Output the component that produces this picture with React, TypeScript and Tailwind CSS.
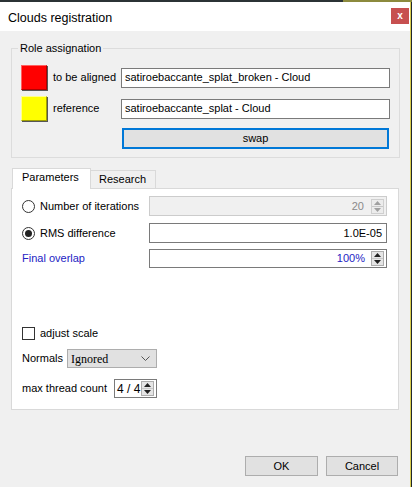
import React from 'react';

const font = "font-['Liberation_Sans',Arial,sans-serif]";

const SpinArrows: React.FC<{ disabled?: boolean; boxed?: boolean }> = ({ disabled, boxed }) => {
  const c = disabled ? '#a0a0a0' : '#202020';
  return (
    <div
      className={
        'flex flex-col w-[13px] h-[15px] mr-[2px] ' +
        (boxed ? 'border border-[#adadad] bg-[#e5e5e5]' : 'border border-[#cfcfcf] bg-[#ececec]')
      }
    >
      <div className="flex-1 flex items-center justify-center border-b border-[#c8c8c8]">
        <svg width="7" height="4" viewBox="0 0 7 4">
          <path d="M0 4 L3.5 0 L7 4 Z" fill={c} />
        </svg>
      </div>
      <div className="flex-1 flex items-center justify-center">
        <svg width="7" height="4" viewBox="0 0 7 4">
          <path d="M0 0 L3.5 4 L7 0 Z" fill={c} />
        </svg>
      </div>
    </div>
  );
};

const Radio: React.FC<{ checked?: boolean }> = ({ checked }) => (
  <div className="w-[13px] h-[13px] rounded-full border border-[#333] bg-white flex items-center justify-center">
    {checked && <div className="w-[7px] h-[7px] rounded-full bg-[#222]" />}
  </div>
);

const Button: React.FC<{ label: string; className?: string }> = ({ label, className }) => (
  <div
    className={
      'h-[20px] bg-[#e1e1e1] border border-[#adadad] flex items-center justify-center text-[11px] text-black ' +
      (className || '')
    }
  >
    {label}
  </div>
);

export default function App() {
  return (
    <div className={'w-[412px] h-[487px] flex flex-col bg-[#2b3235] ' + font}>
      <div className="h-[2px] flex shrink-0">
        <div className="w-[343px] bg-[#2b3235]" />
        <div className="flex-1 bg-[#8c8a3e]" />
      </div>
      <div className="flex-1 flex">
        <div className="w-[410px] flex flex-col bg-[#f0f0f0]">
          {/* title bar */}
          <div className="h-[29px] bg-white flex items-start justify-between shrink-0">
            <span className="text-[12.5px] text-black ml-[8px] mt-[7px]">Clouds registration</span>
            <div className="w-[18px] h-[16px] mt-[6px] mr-[1px] bg-[#c75050] flex items-center justify-center text-white text-[10px] font-bold leading-none">
              x
            </div>
          </div>

          {/* Role assignation */}
          <div className="relative mt-[17px] ml-[11px] w-[389px] h-[110px] border border-[#dcdcdc] pt-[16px] pl-[9px] pr-[8px] text-[11px] text-black">
            <span className="absolute left-[6px] -top-[8px] px-[2px] bg-[#f0f0f0] leading-[14px]">Role assignation</span>
            <div className="flex items-center h-[25px]">
              <div className="w-[26px] h-[25px] bg-[#ff0000] border border-[#b00000] border-l-[#ff6060] border-t-[#ff6060] shadow-[1px_1px_0_#555]" />
              <span className="w-[68px] ml-[6px]">to be aligned</span>
              <div className="w-[269px] h-[20px] bg-white border border-[#7a7a7a] flex items-center pl-[3px]">
                satiroebaccante_splat_broken - Cloud
              </div>
            </div>
            <div className="flex items-center h-[25px] mt-[6px]">
              <div className="w-[26px] h-[25px] bg-[#ffff00] border border-[#a0a000] border-l-[#ffff90] border-t-[#ffff90] shadow-[1px_1px_0_#555]" />
              <span className="w-[68px] ml-[6px]">reference</span>
              <div className="w-[269px] h-[20px] bg-white border border-[#7a7a7a] flex items-center pl-[3px]">
                satiroebaccante_splat - Cloud
              </div>
            </div>
            <div className="ml-[101px] mt-[7px] w-[267px] h-[21px] bg-[#e1e1e1] border-2 border-[#0078d7] flex items-center justify-center">
              swap
            </div>
          </div>

          {/* tabs */}
          <div className="mt-[10px] ml-[12px] flex items-end text-[11px] text-black">
            <div className="w-[79px] h-[21px] bg-white border border-b-0 border-[#d9d9d9] flex items-center pl-[9px] pb-[3px] relative z-10 -mb-px">
              Parameters
            </div>
            <div className="w-[65px] h-[18px] bg-[#f0f0f0] border border-l-0 border-b-0 border-[#d9d9d9] flex items-center pl-[8px] pb-[1px]">
              Research
            </div>
          </div>
          <div className="ml-[11px] w-[388px] h-[222px] bg-white border border-[#d9d9d9] flex flex-col justify-between pt-[7px] pb-[11px] pl-[10px] pr-[11px] text-[11px] text-black">
            <div className="flex flex-col gap-[7px]">
              <div className="flex items-center h-[20px]">
                <div className="w-[127px] flex items-center gap-[5px]">
                  <Radio />
                  <span>Number of iterations</span>
                </div>
                <div className="flex-1 h-[20px] bg-[#f0f0f0] border border-[#cccccc] flex items-center justify-end text-[#8a8a8a]">
                  <span className="mr-[7px]">20</span>
                  <SpinArrows disabled />
                </div>
              </div>
              <div className="flex items-center h-[20px]">
                <div className="w-[127px] flex items-center gap-[5px]">
                  <Radio checked />
                  <span>RMS difference</span>
                </div>
                <div className="flex-1 h-[20px] bg-white border border-[#7a7a7a] flex items-center justify-end pr-[4px]">
                  1.0E-05
                </div>
              </div>
              <div className="flex items-center h-[19px] -mt-[1px]">
                <div className="w-[127px] text-[#2323c4]">Final overlap</div>
                <div className="flex-1 h-[19px] bg-white border border-[#7a7a7a] flex items-center justify-end text-[#2323c4]">
                  <span className="mr-[6px]">100%</span>
                  <SpinArrows boxed />
                </div>
              </div>
            </div>

            <div className="flex flex-col">
              <div className="flex items-center gap-[5px] h-[13px]">
                <div className="w-[13px] h-[13px] border border-[#333] bg-white" />
                <span>adjust scale</span>
              </div>
              <div className="flex items-center mt-[9px] h-[19px]">
                <span className="w-[45px]">Normals</span>
                <div className="w-[90px] h-[19px] bg-[#e1e1e1] border border-[#adadad] flex items-center justify-between pl-[3px] pr-[6px] font-['Liberation_Serif','DejaVu_Serif',serif] text-[12px]">
                  <span>Ignored</span>
                  <svg width="9" height="6" viewBox="0 0 9 6">
                    <path d="M0.5 0.5 L4.5 4.5 L8.5 0.5" stroke="#555" strokeWidth="1" fill="none" />
                  </svg>
                </div>
              </div>
              <div className="flex items-center mt-[11px] h-[19px]">
                <span className="w-[92px]">max thread count</span>
                <div className="w-[43px] h-[19px] bg-white border border-[#7a7a7a] flex items-center justify-between pl-[2px]">
                  <span className="text-[12px]">4 / 4</span>
                  <SpinArrows boxed />
                </div>
              </div>
            </div>
          </div>

          {/* buttons */}
          <div className="flex-1" />
          <div className="flex justify-end gap-[8px] pr-[12px] pb-[11px]">
            <Button label="OK" className="w-[73px]" />
            <Button label="Cancel" className="w-[72px]" />
          </div>
        </div>
        <div className="w-[1px] bg-[#d8cc4c]" />
        <div className="w-[1px] bg-[#20282c]" />
      </div>
    </div>
  );
}
